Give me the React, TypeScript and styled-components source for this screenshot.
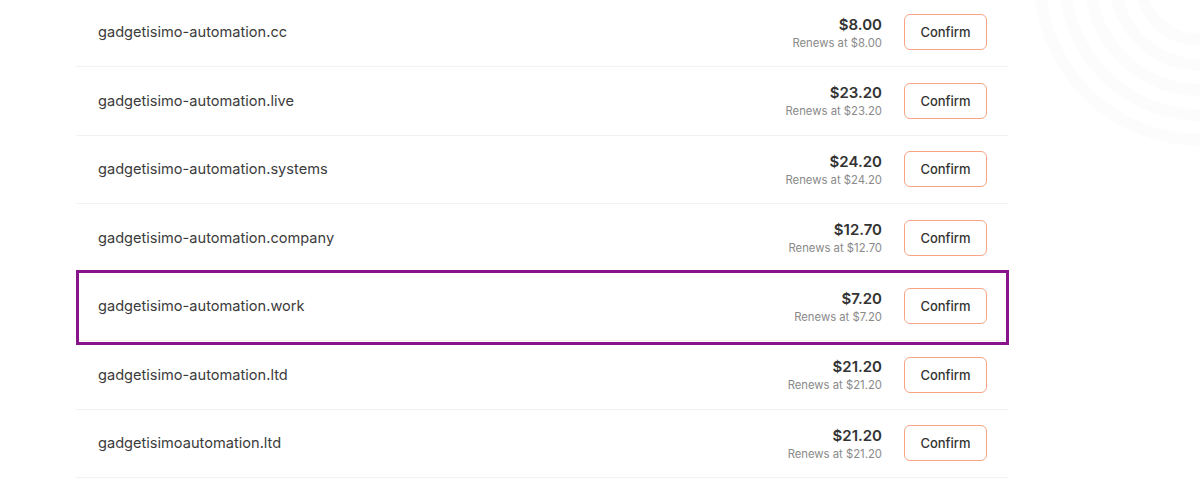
import React from "react";
import styled, { createGlobalStyle } from "styled-components";

const GlobalStyle = createGlobalStyle`
  html, body {
    margin: 0;
    padding: 0;
    background: #fff;
    overflow: hidden;
  }
  body {
    font-family: Inter, "Noto Sans", "Liberation Sans", sans-serif;
    -webkit-font-smoothing: antialiased;
  }
`;

const domains = [
  { name: "gadgetisimo-automation.cc", price: "$8.00" },
  { name: "gadgetisimo-automation.live", price: "$23.20" },
  { name: "gadgetisimo-automation.systems", price: "$24.20" },
  { name: "gadgetisimo-automation.company", price: "$12.70" },
  { name: "gadgetisimo-automation.work", price: "$7.20", selected: true },
  { name: "gadgetisimo-automation.ltd", price: "$21.20" },
  { name: "gadgetisimoautomation.ltd", price: "$21.20" },
];

const Watermark = () => (
  <Decor width="200" height="200" viewBox="0 0 200 200">
    {[160, 135, 110, 85, 60].map((r) => (
      <circle
        key={r}
        cx="200"
        cy="-20"
        r={r}
        fill="none"
        stroke="#fcfcfc"
        strokeWidth="12"
      />
    ))}
  </Decor>
);

const App = () => {
  return (
    <Page>
      <GlobalStyle />
      <Watermark />
      <List>
        {domains.map((d) => (
          <Row key={d.name} selected={d.selected}>
            <Domain>{d.name}</Domain>
            <Right>
              <PriceBlock>
                <Price>{d.price}</Price>
                <Renews>Renews at {d.price}</Renews>
              </PriceBlock>
              <ConfirmButton>Confirm</ConfirmButton>
            </Right>
          </Row>
        ))}
      </List>
    </Page>
  );
};
export default App;

const Page = styled.div`
  position: relative;
  width: 1200px;
  height: 490px;
  overflow: hidden;
  background: #fff;
`;

const Decor = styled.svg`
  position: absolute;
  top: 0;
  right: 0;
`;

const List = styled.div`
  position: relative;
  width: 932px;
  margin: -1.5px 0 0 76px;
  display: flex;
  flex-direction: column;
`;

const Row = styled.div<{ selected?: boolean }>`
  position: relative;
  box-sizing: border-box;
  height: 68.5px;
  display: flex;
  align-items: center;
  justify-content: space-between;
  padding: 0 21px 0 22px;
  border-bottom: 1px solid #f2f2f2;
  ${(p) =>
    p.selected &&
    `
    &::after {
      content: "";
      position: absolute;
      top: -3px;
      bottom: -5px;
      left: 0;
      right: -1px;
      border: 3px solid #871489;
      pointer-events: none;
    }
  `}
`;

const Domain = styled.div`
  font-size: 14.6px;
  color: #3b3b3b;
`;

const Right = styled.div`
  display: flex;
  align-items: center;
  gap: 22px;
`;

const PriceBlock = styled.div`
  display: flex;
  flex-direction: column;
  align-items: flex-end;
  gap: 2px;
  padding-top: 1px;
`;

const Price = styled.div`
  font-size: 15px;
  font-weight: 600;
  color: #333;
  line-height: 19px;
`;

const Renews = styled.div`
  font-size: 11.3px;
  color: #8a8a8a;
  line-height: 15px;
`;

const ConfirmButton = styled.button`
  box-sizing: border-box;
  width: 83px;
  height: 36px;
  border: 1.5px solid #f9a585;
  border-radius: 6px;
  background: #fff;
  color: #333;
  font-family: inherit;
  font-size: 13px;
  font-weight: 500;
  cursor: pointer;
`;
